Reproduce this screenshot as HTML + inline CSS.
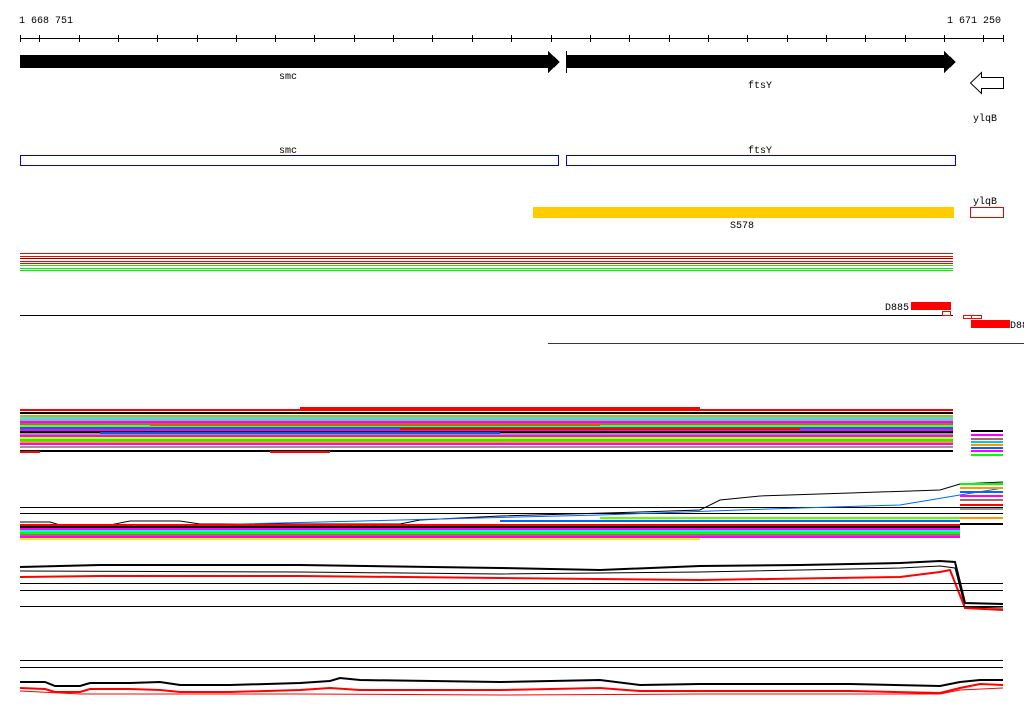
<!DOCTYPE html>
<html><head><meta charset="utf-8"><style>
html,body{margin:0;padding:0;background:#fff;width:1024px;height:714px;overflow:hidden}
svg text{font-family:"Liberation Mono","DejaVu Sans Mono",monospace;font-size:10px;fill:#000}
</style></head><body>
<svg width="1024" height="714" viewBox="0 0 1024 714" xmlns="http://www.w3.org/2000/svg" shape-rendering="crispEdges">
<text x="19" y="23">1 668 751</text>
<text x="947" y="23">1 671 250</text>
<line x1="20" y1="38.5" x2="1004" y2="38.5" stroke="#000"/>
<g stroke="#000">
<line x1="20.5" y1="35" x2="20.5" y2="42"/><line x1="1003.5" y1="35" x2="1003.5" y2="42"/>
<line x1="39.5" y1="35" x2="39.5" y2="42"/><line x1="79.5" y1="35" x2="79.5" y2="42"/><line x1="118.5" y1="35" x2="118.5" y2="42"/><line x1="157.5" y1="35" x2="157.5" y2="42"/><line x1="197.5" y1="35" x2="197.5" y2="42"/><line x1="236.5" y1="35" x2="236.5" y2="42"/><line x1="275.5" y1="35" x2="275.5" y2="42"/><line x1="314.5" y1="35" x2="314.5" y2="42"/><line x1="354.5" y1="35" x2="354.5" y2="42"/><line x1="393.5" y1="35" x2="393.5" y2="42"/><line x1="432.5" y1="35" x2="432.5" y2="42"/><line x1="472.5" y1="35" x2="472.5" y2="42"/><line x1="511.5" y1="35" x2="511.5" y2="42"/><line x1="551.5" y1="35" x2="551.5" y2="42"/><line x1="590.5" y1="35" x2="590.5" y2="42"/><line x1="629.5" y1="35" x2="629.5" y2="42"/><line x1="669.5" y1="35" x2="669.5" y2="42"/><line x1="708.5" y1="35" x2="708.5" y2="42"/><line x1="747.5" y1="35" x2="747.5" y2="42"/><line x1="787.5" y1="35" x2="787.5" y2="42"/><line x1="826.5" y1="35" x2="826.5" y2="42"/><line x1="865.5" y1="35" x2="865.5" y2="42"/><line x1="905.5" y1="35" x2="905.5" y2="42"/><line x1="944.5" y1="35" x2="944.5" y2="42"/><line x1="983.5" y1="35" x2="983.5" y2="42"/>
</g>
<polygon points="20,55 548,55 548,51 560,62 548,73 548,68 20,68" fill="#000"/>
<polygon points="566,55 944,55 944,51 956,62 944,73 944,68 566,68" fill="#000"/>
<line x1="566.5" y1="51" x2="566.5" y2="73" stroke="#000"/>
<polygon points="1003.5,77.5 981.5,77.5 981.5,72.5 970.5,83 981.5,93.5 981.5,88.5 1003.5,88.5" fill="#fff" stroke="#000" shape-rendering="auto"/>
<text x="279" y="79">smc</text>
<text x="748" y="88">ftsY</text>
<text x="973" y="121">ylqB</text>
<text x="279" y="153">smc</text>
<text x="748" y="153">ftsY</text>
<rect x="20.5" y="155.5" width="538" height="10" fill="none" stroke="#0000e0"/>
<rect x="566.5" y="155.5" width="389" height="10" fill="none" stroke="#0000e0"/>
<text x="973" y="204">ylqB</text>
<rect x="970.5" y="207.5" width="33" height="10" fill="none" stroke="#e00"/>
<rect x="533" y="207" width="421" height="11" fill="#fc0"/>
<text x="730" y="228">S578</text>
<g stroke-width="1">
<line x1="20" y1="253.5" x2="953" y2="253.5" stroke="#f00"/>
<line x1="20" y1="256.5" x2="953" y2="256.5" stroke="#f00"/>
<line x1="20" y1="258.5" x2="953" y2="258.5" stroke="#800"/>
<line x1="20" y1="261.5" x2="953" y2="261.5" stroke="#f00"/>
<line x1="20" y1="263.5" x2="953" y2="263.5" stroke="#f00"/>
<line x1="20" y1="265.5" x2="953" y2="265.5" stroke="#0e0"/>
<line x1="20" y1="268.5" x2="953" y2="268.5" stroke="#0e0"/>
<line x1="20" y1="270.5" x2="953" y2="270.5" stroke="#0e0"/>
</g>
<text x="885" y="310">D885</text>
<rect x="911" y="302" width="40" height="8" fill="#f00"/>
<line x1="20" y1="315.5" x2="953" y2="315.5" stroke="#000"/>
<rect x="942.5" y="311.5" width="8" height="4" fill="none" stroke="#f00"/>
<rect x="963.5" y="315.5" width="8" height="3" fill="none" stroke="#f00"/>
<rect x="971.5" y="315.5" width="10" height="3" fill="none" stroke="#f00"/>
<rect x="971" y="320" width="39" height="8" fill="#f00"/>
<text x="1010" y="328">D88</text>
<line x1="548" y1="343.5" x2="1024" y2="343.5" stroke="#335"/>
<!-- band 1 -->
<g stroke-width="2">
<line x1="20" y1="410" x2="953" y2="410" stroke="#f00"/>
<line x1="20" y1="413" x2="953" y2="413" stroke="#000"/>
<line x1="20" y1="416" x2="953" y2="416" stroke="#f90"/>
<line x1="20" y1="418" x2="953" y2="418" stroke="#0ff"/>
<line x1="20" y1="420" x2="953" y2="420" stroke="#aaa"/>
<line x1="20" y1="422" x2="953" y2="422" stroke="#f0f"/>
<line x1="20" y1="424" x2="953" y2="424" stroke="#a66"/>
<line x1="20" y1="426" x2="953" y2="426" stroke="#6f0"/>
<line x1="20" y1="428" x2="953" y2="428" stroke="#06f"/>
<line x1="20" y1="430" x2="953" y2="430" stroke="#f0f"/>
<line x1="20" y1="432" x2="953" y2="432" stroke="#000"/>
<line x1="20" y1="434" x2="953" y2="434" stroke="#999"/>
<line x1="20" y1="436" x2="953" y2="436" stroke="#f0f"/>
<line x1="20" y1="438" x2="953" y2="438" stroke="#cf0"/>
<line x1="20" y1="440" x2="953" y2="440" stroke="#0f0"/>
<line x1="20" y1="442" x2="953" y2="442" stroke="#f90"/>
<line x1="20" y1="444" x2="953" y2="444" stroke="#f0f"/>
<line x1="20" y1="447" x2="953" y2="447" stroke="#999"/>
<line x1="20" y1="451" x2="953" y2="451" stroke="#000"/>
<line x1="300" y1="408" x2="700" y2="408" stroke="#f00"/>
<line x1="150" y1="425" x2="600" y2="425" stroke="#c60"/>
<line x1="400" y1="429" x2="800" y2="429" stroke="#f00"/>
<line x1="100" y1="433" x2="500" y2="433" stroke="#06c"/>
<line x1="20" y1="452" x2="40" y2="452" stroke="#f00"/>
<line x1="270" y1="452" x2="330" y2="452" stroke="#f00"/>
</g>
<g stroke-width="2">
<line x1="971" y1="431" x2="1003" y2="431" stroke="#000"/>
<line x1="971" y1="435" x2="1003" y2="435" stroke="#f0f"/>
<line x1="971" y1="439" x2="1003" y2="439" stroke="#a66"/>
<line x1="971" y1="442" x2="1003" y2="442" stroke="#0cc"/>
<line x1="971" y1="445" x2="1003" y2="445" stroke="#f90"/>
<line x1="971" y1="448" x2="1003" y2="448" stroke="#06f"/>
<line x1="971" y1="451" x2="1003" y2="451" stroke="#f0f"/>
<line x1="971" y1="455" x2="1003" y2="455" stroke="#0f0"/>
</g>
<!-- band 2 -->
<line x1="20" y1="507.5" x2="1003" y2="507.5" stroke="#000"/>
<line x1="20" y1="513.5" x2="1003" y2="513.5" stroke="#000"/>
<polyline points="20,522 50,522 60,525 110,525 130,521 180,521 200,524 400,524 420,520 500,516 640,512 700,510 720,500 760,496 850,493 940,490 960,484 1003,482" fill="none" stroke="#000" shape-rendering="auto"/>
<polyline points="20,525 200,525 400,520 600,515 740,510 800,508 900,505 960,495 1003,488" fill="none" stroke="#06f" shape-rendering="auto"/>
<g stroke-width="2">
<line x1="20" y1="525" x2="960" y2="525" stroke="#f00"/>
<line x1="20" y1="527" x2="960" y2="527" stroke="#000"/>
<line x1="20" y1="529" x2="960" y2="529" stroke="#f0f"/>
<line x1="20" y1="531" x2="960" y2="531" stroke="#0ff"/>
<line x1="20" y1="533" x2="960" y2="533" stroke="#0f0"/>
<line x1="20" y1="535" x2="960" y2="535" stroke="#a66"/>
<line x1="20" y1="537" x2="960" y2="537" stroke="#f0f"/>
<line x1="20" y1="539" x2="700" y2="539" stroke="#cf0"/>
<line x1="500" y1="521" x2="960" y2="521" stroke="#06f"/>
<line x1="600" y1="518" x2="960" y2="518" stroke="#6f0"/>
<line x1="960" y1="484" x2="1003" y2="484" stroke="#0f0"/>
<line x1="960" y1="488" x2="1003" y2="488" stroke="#f90"/>
<line x1="960" y1="492" x2="1003" y2="492" stroke="#06f"/>
<line x1="960" y1="496" x2="1003" y2="496" stroke="#f0f"/>
<line x1="960" y1="500" x2="1003" y2="500" stroke="#a66"/>
<line x1="960" y1="505" x2="1003" y2="505" stroke="#f00"/>
<line x1="960" y1="509" x2="1003" y2="509" stroke="#999"/>
<line x1="960" y1="518" x2="1003" y2="518" stroke="#f90"/>
<line x1="960" y1="524" x2="1003" y2="524" stroke="#000"/>
</g>
<!-- band 3 -->
<polyline points="20,567 100,565 300,565 500,568 600,570 700,566 800,565 900,563 940,561 955,562 965,603 1003,604" fill="none" stroke="#000" stroke-width="2" shape-rendering="auto"/>
<polyline points="20,571 300,572 500,574 700,572 900,568 940,566 955,568 965,607 1003,608" fill="none" stroke="#000" shape-rendering="auto"/>
<polyline points="20,577 100,576 300,576 500,578 700,580 900,577 940,572 950,570 965,608 1003,610" fill="none" stroke="#f00" stroke-width="2" shape-rendering="auto"/>
<line x1="20" y1="583.5" x2="1003" y2="583.5" stroke="#000"/>
<line x1="20" y1="590.5" x2="1003" y2="590.5" stroke="#000"/>
<line x1="20" y1="606.5" x2="1003" y2="606.5" stroke="#000"/>
<!-- band 4 -->
<line x1="20" y1="660.5" x2="1003" y2="660.5" stroke="#000"/>
<line x1="20" y1="667.5" x2="1003" y2="667.5" stroke="#000"/>
<polyline points="20,682 45,682 55,686 80,686 90,683 130,683 160,682 180,685 230,685 300,683 330,681 340,678 360,680 500,682 600,680 640,685 700,684 850,684 940,686 960,682 980,680 1003,680" fill="none" stroke="#000" stroke-width="2" shape-rendering="auto"/>
<polyline points="20,688 45,689 55,692 80,692 90,689 130,689 160,690 180,692 230,692 300,690 330,688 360,690 500,690 600,688 640,691 700,691 850,691 940,693 960,688 980,684 1003,685" fill="none" stroke="#f00" stroke-width="2" shape-rendering="auto"/>
<polyline points="20,691 60,693 80,694 300,694 500,695 700,694 940,694 960,690 1003,688" fill="none" stroke="#f00" shape-rendering="auto"/>
</svg>
</body></html>
